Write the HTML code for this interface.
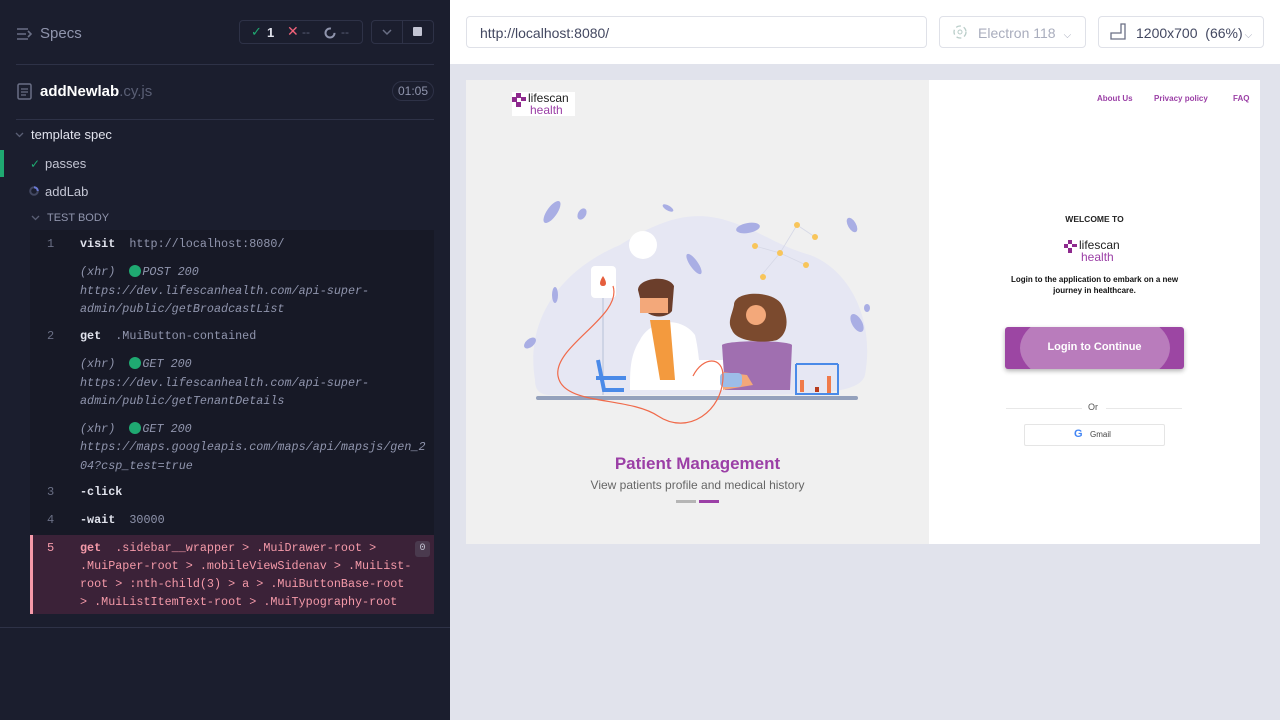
<!DOCTYPE html>
<html><head><meta charset="utf-8"><style>
*{margin:0;padding:0;box-sizing:border-box}
body{width:1280px;height:720px;overflow:hidden;font-family:"Liberation Sans",sans-serif;position:relative;background:#1b1e2e}
.a{position:absolute}
.ln{position:absolute;left:0;width:100%;height:18px;line-height:18px}
.num{position:absolute;left:47px;color:#6a6f85;font-family:"Liberation Mono",monospace;font-size:12px}
.t{position:absolute;left:80px;white-space:nowrap;font-family:"Liberation Mono",monospace;font-size:11.75px;color:#9095ad}
.t b{color:#e1e3ed}
.i{font-style:italic;color:#9095ad}
.dot{display:inline-block;width:12px;height:12px;border-radius:50%;background:#1fa971;vertical-align:-2px;margin-right:1px}
.r .t,.r .t b{color:#f59aa9}
</style></head><body>
<div class="a" style="left:0;top:0;width:450px;height:720px;background:#1b1e2e"></div>
<svg class="a" style="left:16px;top:26px" width="18" height="16"><path d="M1 3h11M1 8h9M1 13h11M12 5l3 3-3 3" stroke="#6a6f85" stroke-width="1.6" fill="none"/></svg>
<div class="a" style="left:40px;top:25px;color:#9095ad;font-size:15px">Specs</div>
<div class="a" style="left:239px;top:20px;width:124px;height:24px;border:1px solid #2e3247;border-radius:4px"></div>
<div class="a" style="left:251px;top:24px;color:#1fa971;font-size:13px">✓</div>
<div class="a" style="left:267px;top:25px;color:#e1e3ed;font-size:13px;font-weight:bold">1</div>
<div class="a" style="left:287px;top:23px;color:#f2627a;font-size:14px">✕</div>
<div class="a" style="left:302px;top:25px;color:#5a5f75;font-size:12px">--</div>
<svg class="a" style="left:324px;top:27px" width="12" height="12"><circle cx="6" cy="6" r="4.5" stroke="#9095ad" stroke-width="2" fill="none" stroke-dasharray="22 6"/></svg>
<div class="a" style="left:341px;top:25px;color:#5a5f75;font-size:12px">--</div>
<div class="a" style="left:371px;top:20px;width:63px;height:24px;border:1px solid #2e3247;border-radius:4px"></div>
<div class="a" style="left:402px;top:20px;width:1px;height:24px;background:#2e3247"></div>
<svg class="a" style="left:381px;top:28px" width="12" height="8"><path d="M2 2l4 4 4-4" stroke="#6a6f85" stroke-width="1.5" fill="none"/></svg>
<div class="a" style="left:413px;top:27px;width:9px;height:9px;background:#c3c5d3;border-radius:1px"></div>
<div class="a" style="left:16px;top:64px;width:418px;height:1px;background:#2e3247"></div>
<svg class="a" style="left:17px;top:83px" width="15" height="17"><rect x="1" y="1" width="13" height="15" rx="1.5" fill="none" stroke="#6a6f85" stroke-width="1.5"/><path d="M4 6h7M4 9h7M4 12h5" stroke="#6a6f85" stroke-width="1.3"/></svg>
<div class="a" style="left:40px;top:83px;font-size:15px;color:#fff;font-weight:bold">addNewlab<span style="font-weight:normal;color:#5a5f75">.cy.js</span></div>
<div class="a" style="left:392px;top:81px;width:42px;height:20px;border:1px solid #2e3247;border-radius:10px;color:#9095ad;font-size:12px;text-align:center;line-height:18px">01:05</div>
<div class="a" style="left:16px;top:119px;width:418px;height:1px;background:#2e3247"></div>
<svg class="a" style="left:15px;top:132px" width="9" height="6"><path d="M1 1l3.5 3.5L8 1" stroke="#5a5f75" stroke-width="1.3" fill="none"/></svg>
<div class="a" style="left:31px;top:127px;color:#e1e3ed;font-size:13px">template spec</div>
<div class="a" style="left:0;top:150px;width:4px;height:27px;background:#1fa971"></div>
<div class="a" style="left:30px;top:157px;color:#1fa971;font-size:12px">✓</div>
<div class="a" style="left:45px;top:156px;color:#c3c5d3;font-size:13px">passes</div>
<svg class="a" style="left:29px;top:186px" width="10" height="10"><circle cx="5" cy="5" r="3.8" stroke="#434861" stroke-width="2" fill="none"/><path d="M5 1.2A3.8 3.8 0 0 1 8.8 5" stroke="#6b7ad6" stroke-width="2" fill="none"/></svg>
<div class="a" style="left:45px;top:184px;color:#c3c5d3;font-size:13px">addLab</div>
<svg class="a" style="left:31px;top:215px" width="9" height="6"><path d="M1 1l3.5 3.5L8 1" stroke="#5a5f75" stroke-width="1.3" fill="none"/></svg>
<div class="a" style="left:47px;top:212px;color:#9095ad;font-size:11px">TEST BODY</div>
<div class="a" style="left:30px;top:230px;width:404px;height:384px;background:#171926">
 <div style="position:relative;left:-30px;top:-230px">
 <div class="ln" style="top:235px"><span class="num">1</span><span class="t"><b>visit</b>&nbsp; http://localhost:8080/</span></div>
 <div class="ln" style="top:263px"><span class="t i">(xhr)&nbsp; <span class="dot"></span>POST 200</span></div>
 <div class="ln" style="top:282px"><span class="t i">https://dev.lifescanhealth.com/api-super-</span></div>
 <div class="ln" style="top:300px"><span class="t i">admin/public/getBroadcastList</span></div>
 <div class="ln" style="top:327px"><span class="num">2</span><span class="t"><b>get</b>&nbsp; .MuiButton-contained</span></div>
 <div class="ln" style="top:355px"><span class="t i">(xhr)&nbsp; <span class="dot"></span>GET 200</span></div>
 <div class="ln" style="top:374px"><span class="t i">https://dev.lifescanhealth.com/api-super-</span></div>
 <div class="ln" style="top:392px"><span class="t i">admin/public/getTenantDetails</span></div>
 <div class="ln" style="top:420px"><span class="t i">(xhr)&nbsp; <span class="dot"></span>GET 200</span></div>
 <div class="ln" style="top:438px"><span class="t i">https://maps.googleapis.com/maps/api/mapsjs/gen_2</span></div>
 <div class="ln" style="top:457px"><span class="t i">04?csp_test=true</span></div>
 <div class="ln" style="top:483px"><span class="num">3</span><span class="t"><b>-click</b></span></div>
 <div class="ln" style="top:511px"><span class="num">4</span><span class="t"><b>-wait</b>&nbsp; 30000</span></div>
 </div>
</div>
<div class="a r" style="left:30px;top:535px;width:404px;height:79px;background:#3b2238;border-left:3px solid #f59aa9">
 <div style="position:relative;left:-33px;top:-535px">
 <div class="ln" style="top:539px"><span class="num" style="color:#f59aa9">5</span><span class="t"><b style="font-weight:bold">get</b>&nbsp; .sidebar__wrapper &gt; .MuiDrawer-root &gt;</span></div>
 <div class="ln" style="top:557px"><span class="t">.MuiPaper-root &gt; .mobileViewSidenav &gt; .MuiList-</span></div>
 <div class="ln" style="top:575px"><span class="t">root &gt; :nth-child(3) &gt; a &gt; .MuiButtonBase-root</span></div>
 <div class="ln" style="top:593px"><span class="t">&gt; .MuiListItemText-root &gt; .MuiTypography-root</span></div>
 </div>
 <div class="a" style="left:382px;top:6px;width:15px;height:16px;background:#4a3a4e;border-radius:3px;color:#c3c5d3;font-size:10px;text-align:center;line-height:16px;font-family:'Liberation Mono',monospace">0</div>
</div>
<div class="a" style="left:0;top:627px;width:450px;height:1px;background:#2e3247"></div>

<div class="a" style="left:450px;top:0;width:830px;height:64px;background:#fff"></div>
<div class="a" style="left:450px;top:64px;width:830px;height:656px;background:#e1e3ec"></div>
<div class="a" style="left:466px;top:16px;width:461px;height:32px;border:1px solid #dfe1e8;border-radius:4px;color:#434861;font-size:14px;line-height:32px;padding-left:13px">http://localhost:8080/</div>
<div class="a" style="left:939px;top:16px;width:147px;height:32px;border:1px solid #dfe1e8;border-radius:4px;color:#a9adbd;font-size:14px;line-height:32px;padding-left:38px">Electron 118<span style="font-size:10px;margin-left:8px">⌵</span></div>
<svg class="a" style="left:952px;top:24px" width="16" height="16"><circle cx="8" cy="8" r="6" stroke="#b8ccc8" stroke-width="1.3" fill="none" stroke-dasharray="5 3"/><circle cx="8" cy="8" r="2" fill="none" stroke="#b8ccc8"/></svg>
<div class="a" style="left:1098px;top:16px;width:166px;height:32px;border:1px solid #dfe1e8;border-radius:4px;color:#434861;font-size:14px;line-height:32px;padding-left:37px">1200x700&nbsp; (66%)<span style="font-size:10px;color:#a9adbd;margin-left:2px">⌵</span></div>
<svg class="a" style="left:1110px;top:23px" width="16" height="17"><path d="M1 16h14V1l-4 0v9H1z" fill="none" stroke="#6a6f85" stroke-width="1.3"/></svg>

<div class="a" style="left:466px;top:80px;width:463px;height:464px;background:#f0f0f0"></div>
<div class="a" style="left:929px;top:80px;width:331px;height:464px;background:#fff"></div>
<div class="a" style="left:512px;top:92px;width:63px;height:24px;background:#fff"></div>
<svg class="a" style="left:512px;top:93px" width="14" height="14"><g fill="#8e2a8e"><rect x="4" y="0" width="5" height="5"/><rect x="0" y="4" width="5" height="5"/><rect x="9" y="4" width="5" height="4"/><rect x="4" y="9" width="5" height="5"/></g></svg>
<div class="a" style="left:528px;top:92px;font-size:12px;color:#222;line-height:12px">lifescan</div>
<div class="a" style="left:530px;top:104px;font-size:12px;color:#9b3fa6;line-height:12px">health</div>
<svg class="a" style="left:510px;top:190px" width="370" height="320">
 <path d="M25 190C15 130 50 80 110 55 150 30 180 20 215 30 250 40 265 55 300 65 340 80 365 130 355 185 350 205 300 205 200 205H40C30 205 25 200 25 190Z" fill="#e6e7f3"/>
 <g fill="#a9aee4"><ellipse cx="42" cy="22" rx="5" ry="13" transform="rotate(35 42 22)"/><ellipse cx="72" cy="24" rx="4" ry="6" transform="rotate(30 72 24)"/><ellipse cx="158" cy="18" rx="2.5" ry="6" transform="rotate(-60 158 18)"/><ellipse cx="238" cy="38" rx="12" ry="5" transform="rotate(-10 238 38)"/><ellipse cx="184" cy="74" rx="4" ry="12" transform="rotate(-35 184 74)"/><ellipse cx="342" cy="35" rx="4" ry="8" transform="rotate(-30 342 35)"/><ellipse cx="45" cy="105" rx="3" ry="8"/><ellipse cx="20" cy="153" rx="4" ry="7" transform="rotate(50 20 153)"/><ellipse cx="347" cy="133" rx="5" ry="10" transform="rotate(-30 347 133)"/><ellipse cx="357" cy="118" rx="3" ry="4"/></g>
 <circle cx="133" cy="55" r="14" fill="#fff"/>
 <g stroke="#d6d8e6" fill="none" stroke-width=".8"><path d="M245 56L270 63 287 35 305 47M270 63L250 87M270 63L296 75"/></g>
 <g fill="#f8c55a"><circle cx="245" cy="56" r="3"/><circle cx="270" cy="63" r="3"/><circle cx="287" cy="35" r="3"/><circle cx="305" cy="47" r="3"/><circle cx="253" cy="87" r="3"/><circle cx="296" cy="75" r="3"/></g>
 <rect x="81" y="76" width="25" height="32" rx="4" fill="#fff"/><path d="M93 86c-4 6-4 10 0 10s4-4 0-10z" fill="#e55e3d"/>
 <line x1="93" y1="108" x2="93" y2="205" stroke="#c7cde0" stroke-width="1.5"/>
 <path d="M88 170l6 30h20M116 188h-30" stroke="#4a8ae8" stroke-width="4" fill="none"/>
 <path d="M130 150c10-20 40-25 55-5 5 20 5 50 10 55h-75c0-20 0-35 10-50z" fill="#fff"/>
 <path d="M140 130l10 60h15l-5-60z" fill="#f39a3e"/>
 <path d="M128 100c0-12 30-16 36-4l-2 25c-6 8-24 8-30-5z" fill="#6b3e2b"/>
 <path d="M130 108h28v15h-28z" fill="#f3a87a"/>
 <path d="M165 170h60v30h-60z" fill="#fff"/>
 <path d="M212 155c5-5 65-5 70 0l-2 45h-65z" fill="#a06fb0"/>
 <path d="M224 115c0-15 40-15 48 0 8 15 5 30-5 35-10 3-40 3-45-10-5-8 0-15 2-25z" fill="#7b4a2e"/>
 <circle cx="246" cy="125" r="10" fill="#f3a87a"/>
 <path d="M212 182l25 3 6 10-30 5z" fill="#f3a87a"/>
 <rect x="210" y="183" width="22" height="14" rx="4" fill="#9dbde8"/>
 <g fill="#f07a4a"><rect x="290" y="190" width="4" height="12"/><rect x="305" y="197" width="4" height="5" fill="#b83c1e"/><rect x="317" y="186" width="4" height="17"/></g>
 <path d="M286 174h42M286 174v30h42v-30" stroke="#4a8ae8" stroke-width="2" fill="none"/>
 <rect x="26" y="206" width="322" height="4" rx="2" fill="#94a1bc"/>
 <path d="M103 96c10 30-60 60-55 90 5 30 70 20 100 40 30 20 65-5 65-40 0-20-20-20-30 0" stroke="#f06a4a" stroke-width="1.2" fill="none"/>
</svg>
<div class="a" style="left:466px;top:454px;width:463px;text-align:center;color:#9b3fa6;font-size:17px;font-weight:bold">Patient Management</div>
<div class="a" style="left:466px;top:478px;width:463px;text-align:center;color:#666;font-size:12px">View patients profile and medical history</div>
<div class="a" style="left:676px;top:500px;width:20px;height:3px;background:#b5b5b5"></div>
<div class="a" style="left:699px;top:500px;width:20px;height:3px;background:#9b3fa6"></div>

<div class="a" style="left:1097px;top:94px;font-size:8px;color:#9b3fa6;font-weight:bold">About Us</div>
<div class="a" style="left:1154px;top:94px;font-size:8px;color:#9b3fa6;font-weight:bold">Privacy policy</div>
<div class="a" style="left:1233px;top:94px;font-size:8px;color:#9b3fa6;font-weight:bold">FAQ</div>
<div class="a" style="left:929px;top:214px;width:331px;text-align:center;font-size:8.5px;color:#222;font-weight:bold">WELCOME TO</div>
<svg class="a" style="left:1064px;top:240px" width="13" height="13"><g fill="#8e2a8e"><rect x="4" y="0" width="4" height="4"/><rect x="0" y="4" width="4" height="4"/><rect x="8" y="4" width="5" height="3"/><rect x="4" y="8" width="4" height="5"/></g></svg>
<div class="a" style="left:1079px;top:239px;font-size:12px;color:#222;line-height:12px">lifescan</div>
<div class="a" style="left:1081px;top:251px;font-size:12px;color:#9b3fa6;line-height:12px">health</div>
<div class="a" style="left:929px;top:274px;width:331px;text-align:center;font-size:8px;color:#111;line-height:11px;font-weight:bold">Login to the application to embark on a new<br>journey in healthcare.</div>
<div class="a" style="left:1005px;top:327px;width:179px;height:42px;background:#9c46a3;border-radius:3px;box-shadow:0 2px 5px rgba(0,0,0,.3);overflow:hidden"><div style="position:absolute;left:15px;top:-20px;width:150px;height:82px;border-radius:50%;background:#b97cbc"></div><div style="position:absolute;width:100%;text-align:center;top:14px;color:#fff;font-size:11px;font-weight:bold">Login to Continue</div></div>
<div class="a" style="left:1006px;top:408px;width:76px;height:1px;background:#e8e8e8"></div>
<div class="a" style="left:1106px;top:408px;width:76px;height:1px;background:#e8e8e8"></div>
<div class="a" style="left:1088px;top:402px;font-size:9px;color:#555">Or</div>
<div class="a" style="left:1024px;top:424px;width:141px;height:22px;border:1px solid #e5e5e5;border-radius:2px;font-size:8px;color:#444;line-height:20px;padding-left:65px">Gmail</div>
<div class="a" style="left:1074px;top:429px;font-size:11px;font-weight:bold;color:#4285f4;line-height:11px">G</div>
</body></html>
